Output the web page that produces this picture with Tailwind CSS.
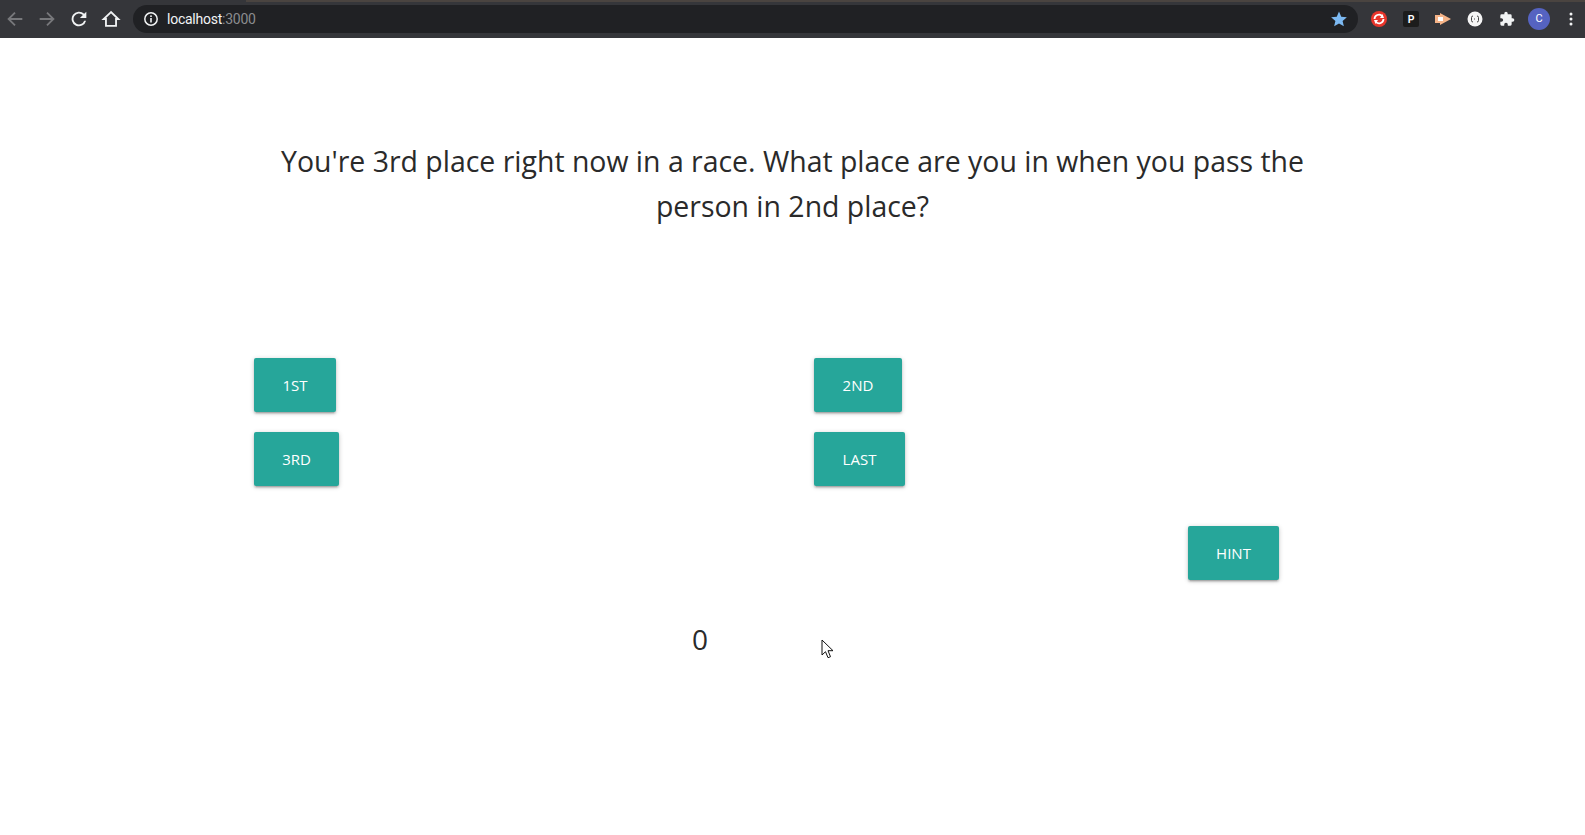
<!DOCTYPE html>
<html>
<head>
<meta charset="utf-8">
<script src="https://cdn.jsdelivr.net/npm/@tailwindcss/browser@4"></script>
</head>
<body class="bg-white font-['Open_Sans',sans-serif] overflow-hidden">
<div class="w-[1585px] h-[835px] flex flex-col">
  <header class="h-[38px] shrink-0 bg-[#35363a] flex items-center relative">
    <div class="absolute top-0 right-0 left-[246px] h-[2px] bg-[#4a4440]"></div>
    <div class="w-[131px] flex items-center pl-[4px] gap-[10px] text-[#8b8c8f]">
      <svg width="22" height="22" viewBox="0 0 24 24" fill="none" stroke="#77787b" stroke-width="2"><path d="M20 12H5M12 5l-7 7 7 7"/></svg>
      <svg width="22" height="22" viewBox="0 0 24 24" fill="none" stroke="#77787b" stroke-width="2"><path d="M4 12h15M12 5l7 7-7 7"/></svg>
      <svg width="22" height="22" viewBox="0 0 24 24" fill="#f1f3f4"><path d="M17.65 6.35A8 8 0 1 0 19.73 14h-2.08a6 6 0 1 1-1.41-6.24L13 11h7V4z"/></svg>
      <svg width="22" height="22" viewBox="0 0 24 24" fill="none" stroke="#f1f3f4" stroke-width="2"><path d="M12 4.500 4 12h2.500v7.500h11V12H20z"/></svg>
    </div>
    <div class="w-[1225px] h-[28px] ml-[2px] rounded-full bg-[#202124] flex items-center pl-[10px] pr-[10px]">
      <svg width="16" height="16" viewBox="0 0 16 16" fill="none"><circle cx="8" cy="8" r="6.200" stroke="#f1f3f4" stroke-width="1.500"/><rect x="7.200" y="7" width="1.600" height="4.500" fill="#f1f3f4"/><rect x="7.200" y="4.400" width="1.600" height="1.600" fill="#f1f3f4"/></svg>
      <span class="ml-[8px] text-[14px] text-[#f1f3f4] font-['Roboto',sans-serif] tracking-[-0.25px]">localhost<span class="text-[#8b8c8f]">:3000</span></span>
      <svg class="ml-auto" width="18" height="18" viewBox="0 0 24 24" fill="#7cb9f2"><path d="m12 2 3 6.900 7.500.7-5.700 4.900 1.700 7.300L12 17.900l-6.500 3.900 1.700-7.300L1.500 9.600l7.500-.7z"/></svg>
    </div>
    <div class="flex items-center flex-1 pl-[13px] gap-[16px]">
      <svg width="16" height="16" viewBox="0 0 16 16"><circle cx="8" cy="8" r="8" fill="#e8352b"/><path d="M3.500 8a4.500 4.500 0 0 1 7.500-3.200M12.500 8a4.500 4.500 0 0 1-7.500 3.200" fill="none" stroke="#fff" stroke-width="1.800"/><path d="M9 7h4l-1.500-4zM7 9H3l1.500 4z" fill="#fff"/></svg>
      <div class="w-[16px] h-[16px] rounded-[2px] bg-[#1c1c1c] text-white text-[10px] font-bold flex items-center justify-center font-['Liberation_Sans',sans-serif]">P</div>
      <svg width="16" height="16" viewBox="0 0 16 16"><path d="M0 4h5V2l11 6-11 6v-2H0z" fill="#f6b488"/><rect x="3" y="6" width="5" height="4" fill="#fff"/></svg>
      <svg width="16" height="16" viewBox="0 0 16 16"><circle cx="8" cy="8" r="7.500" fill="#f5f5f5"/><path d="M6 5q-1.500 0-1.500 1.500v3Q4.500 11 6 11M10 5q1.500 0 1.500 1.500v3Q11.500 11 10 11" fill="none" stroke="#444" stroke-width="1"/><path d="M7 8h2" stroke="#444" stroke-width="1" stroke-dasharray="1 1"/></svg>
      <svg width="16" height="16" viewBox="0 0 24 24" fill="#f1f3f4"><path d="M20.500 11H19V7a2 2 0 0 0-2-2h-4V3.500a2.500 2.500 0 0 0-5 0V5H4a2 2 0 0 0-2 2v3.800h1.500a2.700 2.700 0 0 1 0 5.400H2V20a2 2 0 0 0 2 2h3.800v-1.500a2.700 2.700 0 0 1 5.400 0V22H17a2 2 0 0 0 2-2v-4h1.500a2.500 2.500 0 0 0 0-5z"/></svg>
      <div class="w-[22px] h-[22px] -ml-[3px] rounded-full bg-[#5563c1] text-white text-[11px] flex items-center justify-center font-['Roboto',sans-serif]">C</div>
      <svg width="4" height="14" viewBox="0 0 4 14" fill="#f1f3f4" class="ml-[3px]"><circle cx="2" cy="2" r="1.500"/><circle cx="2" cy="7" r="1.500"/><circle cx="2" cy="12" r="1.500"/></svg>
    </div>
  </header>
  <main class="flex-1 relative">
    <h1 class="mt-[101px] mx-auto w-[1060px] text-center text-[28.450px] leading-[45px] font-normal text-[#2a2a2a]">You're 3rd place right now in a race. What place are you in when you pass the person in 2nd place?</h1>
    <div class="mt-[129px] ml-[254px] w-[1120px] grid grid-cols-2 gap-y-[20px]">
      <div><button class="h-[54px] w-[82px] pt-[1px] rounded-[2px] bg-[#26a69a] text-white text-[15px] shadow-[0_2px_2px_0_rgba(0,0,0,0.14),0_3px_1px_-2px_rgba(0,0,0,0.12),0_1px_5px_0_rgba(0,0,0,0.2)]">1ST</button></div>
      <div><button class="h-[54px] w-[88px] pt-[1px] rounded-[2px] bg-[#26a69a] text-white text-[15px] shadow-[0_2px_2px_0_rgba(0,0,0,0.14),0_3px_1px_-2px_rgba(0,0,0,0.12),0_1px_5px_0_rgba(0,0,0,0.2)]">2ND</button></div>
      <div><button class="h-[54px] w-[85px] pt-[1px] rounded-[2px] bg-[#26a69a] text-white text-[15px] shadow-[0_2px_2px_0_rgba(0,0,0,0.14),0_3px_1px_-2px_rgba(0,0,0,0.12),0_1px_5px_0_rgba(0,0,0,0.2)]">3RD</button></div>
      <div><button class="h-[54px] w-[91px] pt-[1px] rounded-[2px] bg-[#26a69a] text-white text-[15px] shadow-[0_2px_2px_0_rgba(0,0,0,0.14),0_3px_1px_-2px_rgba(0,0,0,0.12),0_1px_5px_0_rgba(0,0,0,0.2)]">LAST</button></div>
    </div>
    <div class="mt-[40px] ml-[1188px]"><button class="h-[54px] w-[91px] pt-[1px] rounded-[2px] bg-[#26a69a] text-white text-[15px] shadow-[0_2px_2px_0_rgba(0,0,0,0.14),0_3px_1px_-2px_rgba(0,0,0,0.12),0_1px_5px_0_rgba(0,0,0,0.2)]">HINT</button></div>
    <div class="mt-[39px] ml-[692px] text-[28px] leading-[40px] text-[#2a2a2a] font-normal">0</div>
    <svg class="absolute left-[821px] top-[601px]" width="13" height="21" viewBox="0 0 13 21"><path d="M1 1v15l3.500-3.300 2.500 6 2.500-1-2.500-6H12z" fill="#fff" stroke="#111" stroke-width="1"/></svg>
  </main>
</div>
</body>
</html>
